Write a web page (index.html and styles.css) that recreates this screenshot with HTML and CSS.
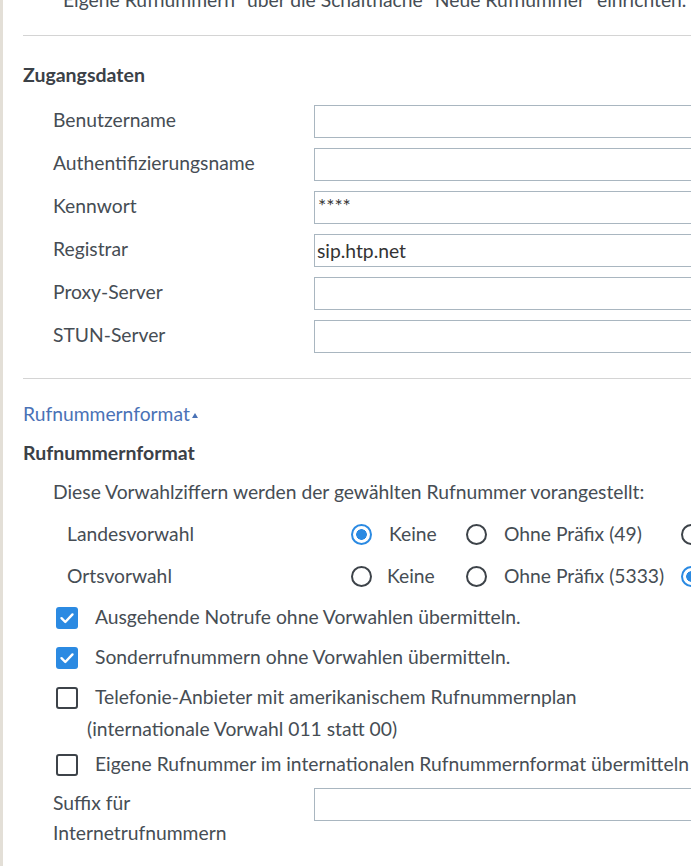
FILE: index.html
```html
<!DOCTYPE html>
<html lang="de">
<head>
  <meta charset="UTF-8">
  <meta name="viewport" content="width=device-width, initial-scale=1.0">
  <link rel="stylesheet" href="styles.css">
</head>
<body>
  <div class="page">
    <p class="intro">Eigene Rufnummern" über die Schaltfläche "Neue Rufnummer" einrichten.</p>
    <hr class="rule">

    <!-- Zugangsdaten -->
    <h3 class="section-title">Zugangsdaten</h3>
    <div class="fields">
      <label class="field-label">Benutzername</label>
      <input class="field-input" type="text" value="">
      <label class="field-label">Authentifizierungsname</label>
      <input class="field-input" type="text" value="">
      <label class="field-label">Kennwort</label>
      <input class="field-input pass" type="text" value="****">
      <label class="field-label">Registrar</label>
      <input class="field-input" type="text" value="sip.htp.net">
      <label class="field-label">Proxy-Server</label>
      <input class="field-input" type="text" value="">
      <label class="field-label">STUN-Server</label>
      <input class="field-input" type="text" value="">
    </div>
    <hr class="rule rule-low">

    <!-- Rufnummernformat -->
    <a class="toggle" href="#">Rufnummernformat<span class="caret"></span></a>
    <h3 class="section-title sub">Rufnummernformat</h3>
    <p class="lead">Diese Vorwahlziffern werden der gewählten Rufnummer vorangestellt:</p>

    <div class="choices">
      <span class="choice-label">Landesvorwahl</span>
      <label class="opt"><span class="radio on"></span>Keine</label>
      <label class="opt"><span class="radio"></span>Ohne Präfix (49)</label>
      <label class="opt"><span class="radio"></span>Mit Präfix (0049)</label>

      <span class="choice-label">Ortsvorwahl</span>
      <label class="opt tight"><span class="radio"></span>Keine</label>
      <label class="opt"><span class="radio"></span>Ohne Präfix (5333)</label>
      <label class="opt"><span class="radio on"></span>Mit Präfix (05333)</label>
    </div>

    <div class="checks">
      <label class="check"><span class="box on"><svg viewBox="0 0 22 22" width="22" height="22"><path d="M5.5 11.2l3.8 3.8 7.2-7.6" fill="none" stroke="#fff" stroke-width="2.4" stroke-linecap="round" stroke-linejoin="round"/></svg></span>Ausgehende Notrufe ohne Vorwahlen übermitteln.</label>
      <label class="check"><span class="box on"><svg viewBox="0 0 22 22" width="22" height="22"><path d="M5.5 11.2l3.8 3.8 7.2-7.6" fill="none" stroke="#fff" stroke-width="2.4" stroke-linecap="round" stroke-linejoin="round"/></svg></span>Sonderrufnummern ohne Vorwahlen übermitteln.</label>
      <label class="check wrap"><span class="box"></span>Telefonie-Anbieter mit amerikanischem Rufnummernplan<br>(internationale Vorwahl 011 statt 00)</label>
      <label class="check"><span class="box"></span>Eigene Rufnummer im internationalen Rufnummernformat übermitteln</label>
    </div>

    <div class="fields suffix">
      <label class="field-label">Suffix für<br>Internetrufnummern</label>
      <input class="field-input" type="text" value="">
    </div>
  </div>
</body>
</html>
```

FILE: styles.css
```css
html, body {
  margin: 0;
  overflow: hidden;
}
body {
  background: #fff;
  font-family: Lato, "Noto Sans", sans-serif;
  font-size: 19.3px;
  color: #464d54;
  border-left: 3px solid #e3dfd7;
  height: 866px;
  box-sizing: border-box;
}
.page {
  width: 1000px;
  padding-left: 20px;
  line-height: 30px;
}
.intro {
  margin: -15px 0 0 40px;
  white-space: nowrap;
}
.rule {
  border: 0;
  border-top: 1px solid #d4d4d4;
  margin: 20px 0 0;
  height: 0;
}
.rule-low {
  margin-top: 25px;
}
.section-title {
  margin: 24px 0 0;
  font-size: 19.5px;
  font-weight: 700;
  color: #3b4147;
}
.section-title.sub {
  margin-top: 9px;
}

/* label | input rows */
.fields {
  display: grid;
  grid-template-columns: 261px 420px;
  row-gap: 10px;
  margin-top: 15px;
  padding-left: 30px;
  align-items: center;
}
.field-label {
  margin-bottom: 3px;
}
.field-input {
  height: 33px;
  box-sizing: border-box;
  border: 1px solid #a9b6c0;
  border-radius: 0;
  padding: 0 2px;
  font: inherit;
  color: #333;
  outline: none;
}
.field-input.pass {
  padding-left: 3px;
  padding-bottom: 4px;
}
.fields.suffix {
  margin-top: 9px;
  align-items: start;
}
.fields.suffix .field-label {
  margin-bottom: 0;
}

.toggle {
  display: inline-block;
  margin-top: 20px;
  color: #4a72b6;
  text-decoration: none;
}
.caret {
  display: inline-block;
  margin-left: 2px;
  vertical-align: 3px;
  border-left: 3.5px solid transparent;
  border-right: 3.5px solid transparent;
  border-bottom: 5px solid #4a72b6;
}
.lead {
  margin: 9px 0 0 30px;
}

/* radio groups */
.choices {
  display: grid;
  grid-template-columns: 284px 115px 215px 200px;
  row-gap: 12px;
  margin-top: 12px;
  padding-left: 44px;
  white-space: nowrap;
}
.opt {
  display: flex;
  align-items: center;
  gap: 17px;
}
.opt.tight {
  gap: 15px;
}
.radio {
  width: 21px;
  height: 21px;
  box-sizing: border-box;
  border-radius: 50%;
  border: 2px solid #3d4349;
  flex: none;
}
.radio.on {
  border: 2.5px solid #2b8ae2;
  background: radial-gradient(circle, #2b8ae2 0 5px, #fff 5.6px);
}

/* checkbox rows */
.checks {
  margin-top: 11px;
}
.check {
  display: block;
  padding-left: 64px;
  margin-bottom: 10px;
  white-space: nowrap;
}
.check.wrap {
  line-height: 32px;
  margin-top: -1px;
  margin-bottom: 4px;
}
.box {
  display: inline-block;
  width: 22px;
  height: 22px;
  box-sizing: border-box;
  margin-left: -31px;
  margin-right: 17px;
  vertical-align: -5px;
  border: 2.5px solid #3d4349;
  border-radius: 3px;
}
.box.on {
  border: 0;
  background: #2b8ae2;
}
.box svg {
  display: block;
}
.check:last-child {
  margin-bottom: 0;
}
```
